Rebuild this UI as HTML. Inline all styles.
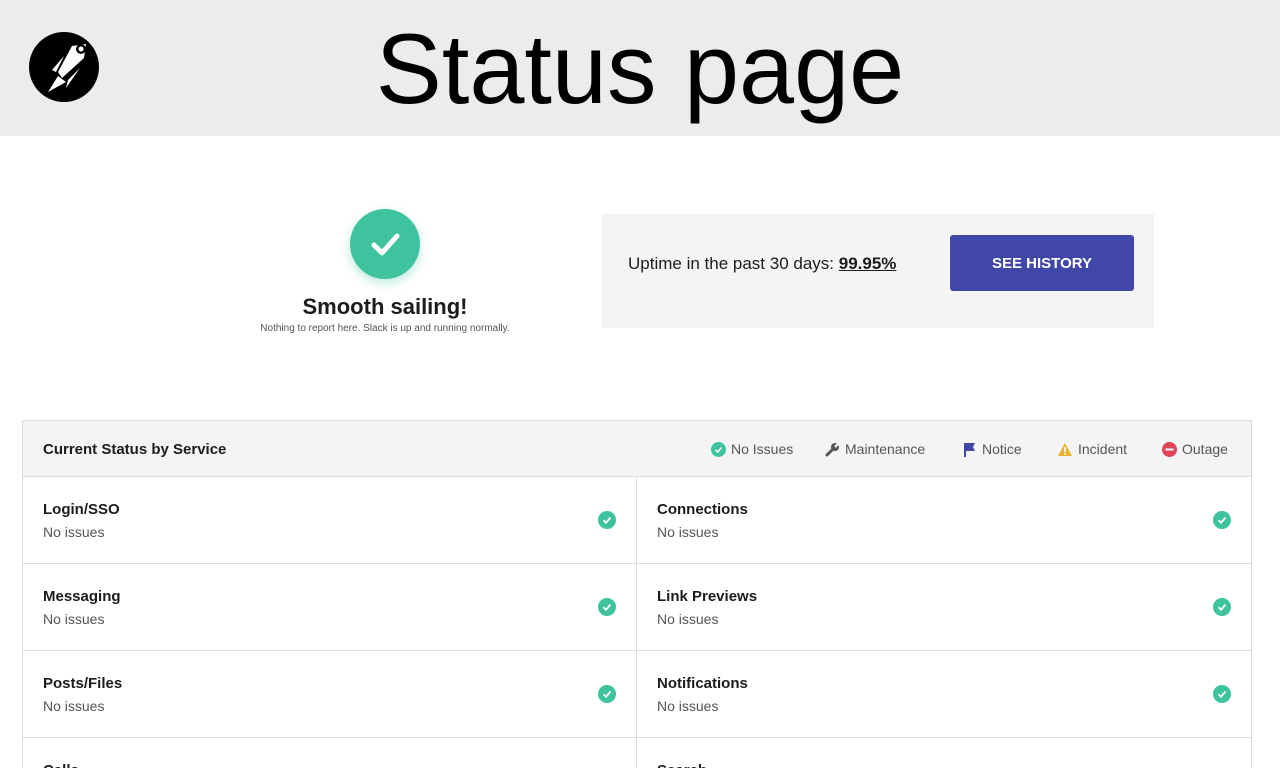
<!DOCTYPE html>
<html style="width:1280px;height:768px;overflow:hidden"><head><meta charset="utf-8"><style>
*{margin:0;padding:0;box-sizing:border-box}
body{width:1280px;height:768px;overflow:hidden;background:#fff;font-family:"Liberation Sans",sans-serif;color:#1d1c1d;position:relative}
.hdr{position:absolute;left:0;top:0;width:1280px;height:136px;background:#ececec}
.title{position:absolute;left:0;width:1280px;top:14px;text-align:center;font-size:99px;color:#000;line-height:110px}
.abs{position:absolute}
.box{position:absolute;left:22px;top:420px;width:1230px;height:348px;border:1px solid #ddd;border-bottom:none;overflow:hidden}
.th{height:56px;background:#f4f4f4;border-bottom:1px solid #ddd;position:relative}
.row{position:absolute;width:614px;height:87px;border-bottom:1px solid #ddd}
.row b{position:absolute;left:20px;top:24px;font-size:15px;color:#1d1c1d}
.row span{position:absolute;left:20px;top:47px;font-size:14px;color:#555}
.row svg{position:absolute;right:20px;top:34px}
.lg{position:absolute;top:20px;font-size:14px;color:#555;display:flex;align-items:center;gap:5px}
</style></head><body>
<div class="hdr">
<svg class="abs" style="left:28px;top:32px" width="72" height="70" viewBox="0 0 72 70"><circle cx="36" cy="35" r="35" fill="#000"/>
<path d="M30 40 L44 14 L58 12 L56 26 L34 46 Z" fill="#fff"/><circle cx="53" cy="17" r="5" fill="#000"/><circle cx="53" cy="17" r="2.5" fill="#fff"/>
<path d="M24 38 L36 24 L28 40 Z" fill="#fff"/><path d="M40 48 L52 36 L38 56 Z" fill="#fff"/>
<path d="M30 44 L38 50 L20 60 Z" fill="#fff"/></svg>
<div class="title">Status page</div></div>
<div class="abs" style="left:350px;top:209px;width:70px;height:70px;border-radius:50%;background:#3fc39e;box-shadow:0 4px 10px rgba(63,195,158,.35)"></div>
<svg class="abs" style="left:350px;top:209px" width="70" height="70"><path d="M24 36 L32 44 L47 27" stroke="#fff" stroke-width="5" fill="none" stroke-linecap="round" stroke-linejoin="round"/></svg>
<div class="abs" style="left:200px;width:370px;top:294px;text-align:center;font-size:22px;font-weight:bold;color:#1d1c1d">Smooth sailing!</div>
<div class="abs" style="left:200px;width:370px;top:323px;text-align:center;font-size:10px;color:#555">Nothing to report here. Slack is up and running normally.</div>
<div class="abs" style="left:602px;top:214px;width:552px;height:114px;background:#f4f4f4"></div>
<div class="abs" style="left:628px;top:254px;font-size:17px;color:#1d1c1d">Uptime in the past 30 days: <b style="text-decoration:underline">99.95%</b></div>
<div class="abs" style="left:950px;top:235px;width:184px;height:56px;background:#4047a8;border-radius:3px;color:#fff;font-weight:bold;font-size:15px;text-align:center;line-height:58px">SEE HISTORY</div>
<div class="box"><div class="th">
<div class="abs" style="left:20px;top:20px;font-size:15px;font-weight:bold">Current Status by Service</div>
<div class="lg" style="left:688px"><svg width="15" height="15"><circle cx="7.5" cy="7.5" r="7.5" fill="#3fc39e"/><path d="M4.5 7.8 L6.7 10 L10.5 5.5" stroke="#fff" stroke-width="1.6" fill="none"/></svg>No Issues</div>
<div class="lg" style="left:802px"><svg width="15" height="15"><path d="M2 13 L8 7" stroke="#555" stroke-width="3" stroke-linecap="round"/><circle cx="10" cy="5" r="4" fill="#555"/><path d="M10 5 L14 1" stroke="#f4f4f4" stroke-width="2.5"/></svg>Maintenance</div>
<div class="lg" style="left:940px"><svg width="14" height="15"><rect x="1" y="1" width="2" height="14" fill="#4047a8"/><path d="M3 1 H12 L10 5 L12 9 H3Z" fill="#4047a8"/></svg>Notice</div>
<div class="lg" style="left:1034px"><svg width="16" height="15"><path d="M8 1 L15 14 H1Z" fill="#ecb22e"/><rect x="7.2" y="5" width="1.6" height="5" fill="#fff"/><rect x="7.2" y="11" width="1.6" height="1.6" fill="#fff"/></svg>Incident</div>
<div class="lg" style="left:1139px"><svg width="15" height="15"><circle cx="7.5" cy="7.5" r="7.5" fill="#e0445b"/><rect x="3.5" y="6.5" width="8" height="2" fill="#fff"/></svg>Outage</div>
</div>
<div class="row" style="left:0;top:56px;border-right:1px solid #ddd"><b>Login/SSO</b><span>No issues</span><svg width="18" height="18"><circle cx="9" cy="9" r="9" fill="#3fc39e"/><path d="M5.5 9.3 L8 11.8 L12.5 6.5" stroke="#fff" stroke-width="1.8" fill="none"/></svg></div>
<div class="row" style="left:614px;top:56px"><b>Connections</b><span>No issues</span><svg width="18" height="18"><circle cx="9" cy="9" r="9" fill="#3fc39e"/><path d="M5.5 9.3 L8 11.8 L12.5 6.5" stroke="#fff" stroke-width="1.8" fill="none"/></svg></div>
<div class="row" style="left:0;top:143px;border-right:1px solid #ddd"><b>Messaging</b><span>No issues</span><svg width="18" height="18"><circle cx="9" cy="9" r="9" fill="#3fc39e"/><path d="M5.5 9.3 L8 11.8 L12.5 6.5" stroke="#fff" stroke-width="1.8" fill="none"/></svg></div>
<div class="row" style="left:614px;top:143px"><b>Link Previews</b><span>No issues</span><svg width="18" height="18"><circle cx="9" cy="9" r="9" fill="#3fc39e"/><path d="M5.5 9.3 L8 11.8 L12.5 6.5" stroke="#fff" stroke-width="1.8" fill="none"/></svg></div>
<div class="row" style="left:0;top:230px;border-right:1px solid #ddd"><b>Posts/Files</b><span>No issues</span><svg width="18" height="18"><circle cx="9" cy="9" r="9" fill="#3fc39e"/><path d="M5.5 9.3 L8 11.8 L12.5 6.5" stroke="#fff" stroke-width="1.8" fill="none"/></svg></div>
<div class="row" style="left:614px;top:230px"><b>Notifications</b><span>No issues</span><svg width="18" height="18"><circle cx="9" cy="9" r="9" fill="#3fc39e"/><path d="M5.5 9.3 L8 11.8 L12.5 6.5" stroke="#fff" stroke-width="1.8" fill="none"/></svg></div>
<div class="row" style="left:0;top:317px;height:31px;border-bottom:none;border-right:1px solid #ddd"><b>Calls</b></div>
<div class="row" style="left:614px;top:317px;height:31px;border-bottom:none"><b>Search</b></div>
</div>
</body></html>
